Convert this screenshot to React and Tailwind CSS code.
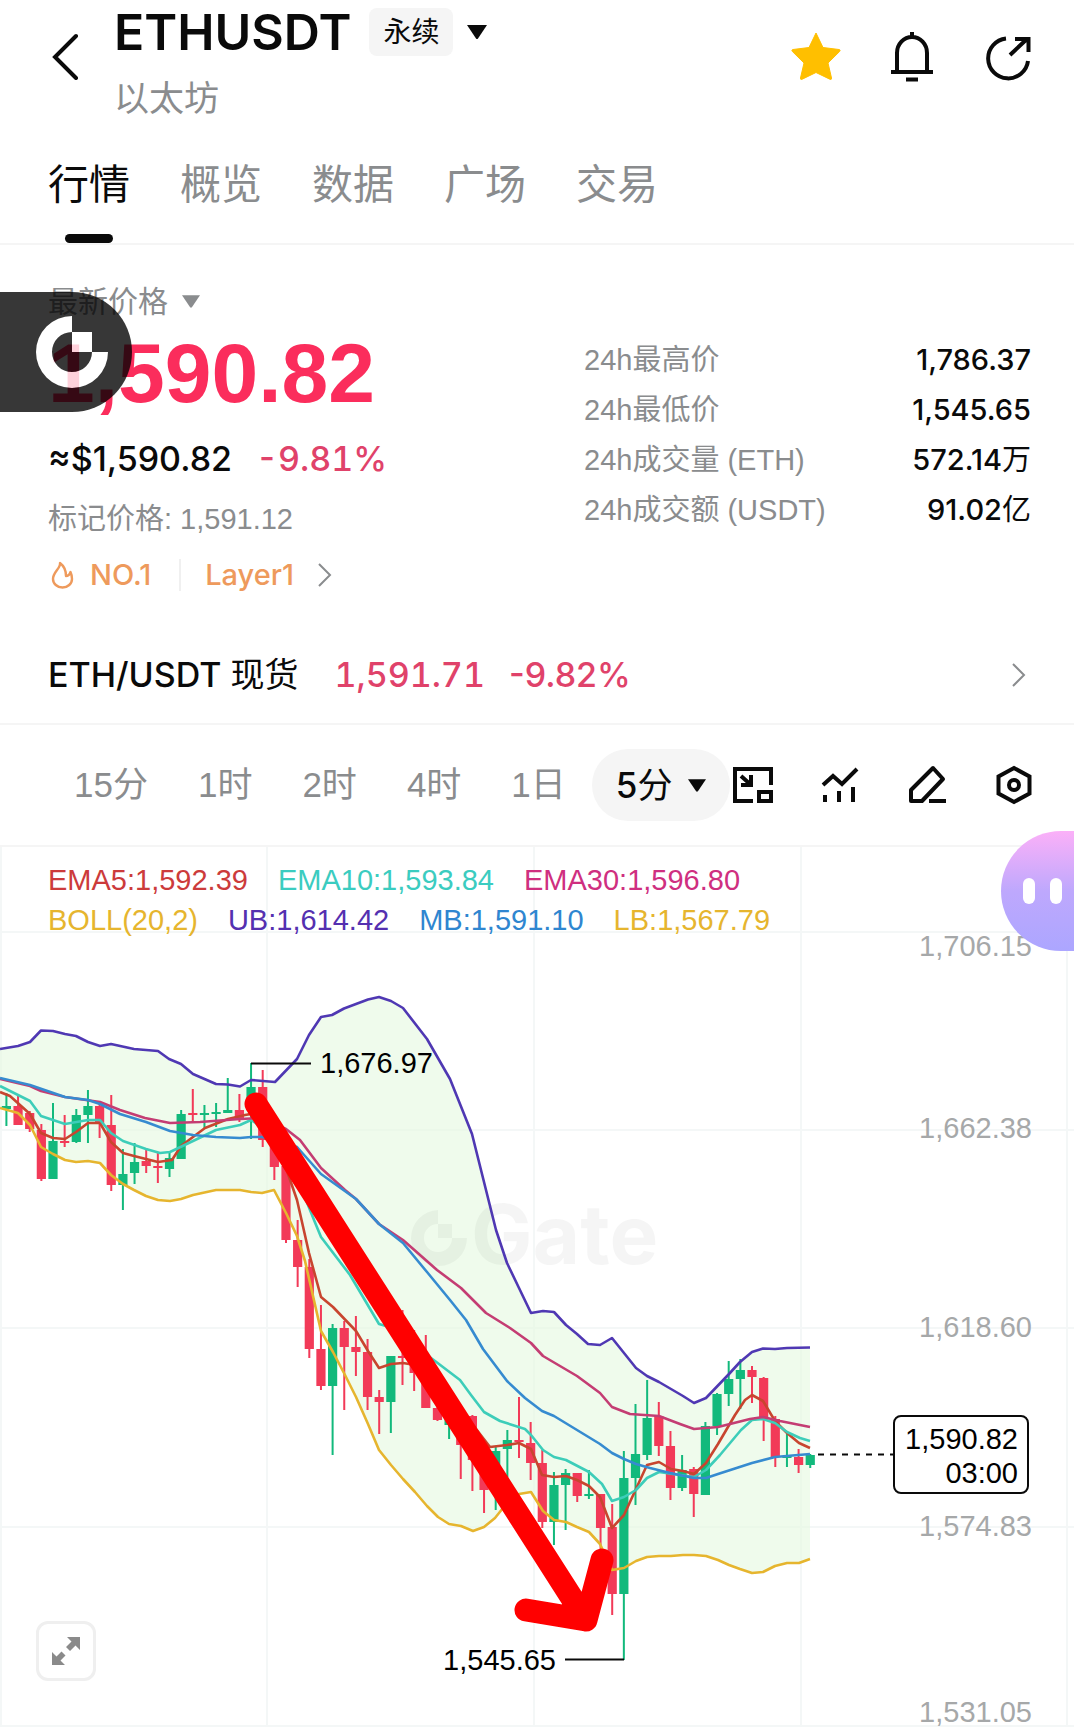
const numFont = "font-['Liberation_Sans','Noto_Sans_CJK_SC',sans-serif]"

const tabs = ['行情', '概览', '数据', '广场', '交易']

const stats = [
  { label: '24h最高价', value: '1,786.37' },
  { label: '24h最低价', value: '1,545.65' },
  { label: '24h成交量 (ETH)', value: '572.14', unit: '万' },
  { label: '24h成交额 (USDT)', value: '91.02', unit: '亿' },
]

const intervals = ['15分', '1时', '2时', '4时', '1日']

const emaLegend = [
  { text: 'EMA5:1,592.39', color: 'text-[#cc3b3b]' },
  { text: 'EMA10:1,593.84', color: 'text-[#3bccc0]' },
  { text: 'EMA30:1,596.80', color: 'text-[#cf2f80]' },
]

const bollLegend = [
  { text: 'BOLL(20,2)', color: 'text-[#e6b52e]' },
  { text: 'UB:1,614.42', color: 'text-[#5430b0]' },
  { text: 'MB:1,591.10', color: 'text-[#2f86d0]' },
  { text: 'LB:1,567.79', color: 'text-[#e6b52e]' },
]

// [up, high, body top, body bottom, low]
const candles = [
  [1, 1093, 1106, 1109, 1126], [0, 1096, 1106, 1125, 1125], [0, 1111, 1113, 1129, 1132],
  [0, 1124, 1130, 1179, 1181], [1, 1103, 1141, 1179, 1179], [0, 1115, 1141, 1143, 1147],
  [1, 1109, 1115, 1142, 1143], [1, 1090, 1106, 1115, 1143], [0, 1104, 1106, 1124, 1138],
  [0, 1095, 1125, 1185, 1191], [1, 1149, 1174, 1185, 1210], [1, 1143, 1162, 1173, 1184],
  [0, 1148, 1161, 1166, 1173], [0, 1152, 1166, 1168, 1183], [1, 1152, 1158, 1169, 1177],
  [1, 1110, 1114, 1159, 1159], [0, 1089, 1113, 1115, 1121], [1, 1105, 1113, 1115, 1128],
  [1, 1103, 1112, 1114, 1127], [1, 1078, 1110, 1113, 1113], [0, 1094, 1110, 1119, 1122],
  [1, 1063, 1087, 1110, 1139], [0, 1070, 1087, 1140, 1147], [0, 1138, 1140, 1167, 1180],
  [0, 1160, 1166, 1240, 1243], [0, 1220, 1240, 1267, 1287], [0, 1259, 1267, 1349, 1358],
  [0, 1305, 1349, 1386, 1390], [1, 1324, 1328, 1386, 1455], [0, 1321, 1328, 1347, 1410],
  [0, 1316, 1347, 1352, 1376], [0, 1339, 1352, 1397, 1410], [0, 1390, 1397, 1402, 1434],
  [1, 1356, 1356, 1402, 1433], [0, 1310, 1356, 1358, 1385], [0, 1330, 1357, 1373, 1391],
  [0, 1335, 1357, 1408, 1408], [0, 1405, 1408, 1420, 1421], [1, 1408, 1412, 1425, 1439],
  [0, 1412, 1416, 1445, 1479], [0, 1415, 1416, 1460, 1491], [0, 1446, 1450, 1490, 1513],
  [1, 1447, 1451, 1490, 1510], [1, 1430, 1440, 1449, 1477], [0, 1397, 1440, 1442, 1458],
  [0, 1422, 1443, 1463, 1480], [0, 1450, 1463, 1522, 1528], [1, 1472, 1485, 1522, 1545],
  [1, 1469, 1473, 1485, 1530], [0, 1473, 1473, 1496, 1502], [1, 1470, 1494, 1496, 1499],
  [0, 1494, 1494, 1528, 1551], [0, 1504, 1527, 1594, 1615], [1, 1451, 1478, 1594, 1660],
  [1, 1404, 1454, 1478, 1505], [1, 1380, 1418, 1455, 1460], [0, 1402, 1416, 1446, 1456],
  [0, 1431, 1446, 1488, 1500], [1, 1455, 1470, 1488, 1491], [0, 1467, 1469, 1494, 1517],
  [1, 1422, 1426, 1495, 1495], [1, 1393, 1394, 1426, 1435], [1, 1361, 1379, 1394, 1406],
  [1, 1359, 1370, 1379, 1409], [0, 1366, 1370, 1377, 1403], [0, 1377, 1378, 1419, 1441],
  [0, 1416, 1419, 1457, 1467], [1, 1434, 1456, 1458, 1467], [0, 1449, 1457, 1465, 1473],
  [1, 1454, 1455, 1465, 1468],
]

const upperBand =
  '0,1049 6,1048 18,1046 30,1042 41,1030.5 53,1031 65,1034 76,1036 88,1042 100,1046 111,1044 134,1049 158,1051 169,1059 181,1064 193,1074 216,1084 228,1084.5 240,1086.5 251,1080 275,1082 297,1059 309,1035 321,1017 332,1015 344,1008.5 356,1004 368,999.5 379,997 391,1001 403,1008 427,1039 450,1079 472,1134 484,1182 496,1230 507,1263 519,1288 531,1313 543,1311 554,1312 566,1325 577,1334 588,1344 600,1345 612,1338 636,1368 647,1376 659,1382 671,1389 683,1396 694,1403 706,1398 729,1374 740,1362 752,1352 763,1348.5 775,1349 787,1348 810,1347.5'

const lowerBand =
  '0,1108 18,1113 30,1125 41,1147 53,1154 65,1160 76,1162 88,1161 100,1163 111,1175 123,1184 134,1190 146,1196 158,1200 170,1201 181,1199 193,1195 216,1190 240,1190 251,1192 262,1193 274,1190 286,1213 297,1236 305,1261 321,1331 333,1352 345,1375 356,1397 368,1424 379,1450 391,1465 403,1479 415,1492 427,1506 438,1517 449,1524 461,1526 473,1531 484,1527 495,1518 507,1503 519,1494 531,1492 543,1511 554,1520 566,1522 577,1527 589,1532 600,1544 612,1570 624,1568 636,1561 647,1557 659,1556 671,1556 683,1555 694,1555 706,1556 718,1560 729,1565 740,1569 752,1573 763,1572 775,1566 787,1563 799,1563 810,1559'

const lines = [
  {
    color: '#c8452f',
    points:
      '0,1092 10,1096 30,1114 41,1133 53,1138 65,1139 76,1132 88,1123 100,1123 111,1142 123,1153 134,1156 158,1162 172,1160 181,1146 205,1128 228,1119 245,1115 262,1112 275,1125 286,1168 297,1200 309,1253 321,1297 333,1307 356,1331 368,1351 379,1368 391,1364 403,1363 415,1365 450,1395 473,1425 490,1447 507,1445 519,1443 531,1449 542,1475 554,1477 566,1476 577,1480 589,1486 600,1497 612,1528 624,1515 647,1465 659,1462 671,1469 683,1471 694,1474 706,1463 718,1444 735,1415 745,1400 752,1395 763,1401 775,1421 787,1433 799,1443 810,1448',
  },
  {
    color: '#3dcdb9',
    points:
      '0,1086 30,1101 41,1116 65,1124 88,1120 100,1120 111,1133 123,1141 146,1149 160,1153 170,1152 193,1141 216,1130 240,1125 251,1120 275,1135 290,1160 314,1220 321,1237 350,1275 379,1324 393,1328 427,1355 435,1361 460,1380 471,1395 484,1412 500,1421 525,1429 531,1435 543,1450 554,1457 566,1460 589,1472 602,1484 612,1501 624,1497 636,1490 647,1478 659,1472 694,1477 706,1470 720,1455 741,1430 752,1420 763,1419 775,1423 787,1432 800,1438 810,1441',
  },
  {
    color: '#c43d73',
    points:
      '0,1079 30,1086 41,1091 65,1097 100,1102 120,1110 145,1118 170,1123 200,1122 240,1119 262,1118 286,1129 300,1140 321,1168 345,1190 356,1199 379,1224 403,1240 437,1270 461,1288 486,1313 510,1328 531,1343 543,1356 577,1376 600,1393 612,1407 630,1414 659,1416 680,1424 694,1429 718,1427 750,1419 763,1417 780,1421 810,1427',
  },
  {
    color: '#368bd0',
    points:
      '0,1078 30,1085 65,1097 88,1100 100,1104 120,1114 146,1122 170,1131 193,1135 216,1137 240,1138 251,1137 262,1137 275,1140 297,1147 321,1174 356,1199 379,1224 403,1243 427,1272 450,1300 466,1320 483,1349 507,1381 525,1398 542,1411 554,1416 577,1430 600,1444 612,1453 624,1459 636,1464 650,1468 670,1473 694,1478 706,1478 718,1474 752,1463 775,1457 810,1454',
  },
  { color: '#4f38b3', points: upperBand },
  { color: '#e6b52e', points: lowerBand },
]

const axis = [
  { label: '1,706.15', y: 956 },
  { label: '1,662.38', y: 1138 },
  { label: '1,618.60', y: 1337 },
  { label: '1,574.83', y: 1536 },
  { label: '1,531.05', y: 1722 },
]

const CaretDown = ({ className }) => (
  <svg viewBox="0 0 20 14" fill="currentColor" className={className}>
    <path d="M0 0h20L11 13.500q-1 1-2 0z" />
  </svg>
)

const ChevronRight = ({ className }) => (
  <svg viewBox="0 0 14 24" fill="none" stroke="currentColor" strokeWidth="2" className={className}>
    <path d="M1 1l11 11L1 23" />
  </svg>
)

const Header = () => (
  <header className="flex items-start justify-between pr-10 pl-12">
    <div className="flex">
      <button aria-label="返回" className="mt-8 mr-[30px] h-12">
        <svg viewBox="0 0 36 48" fill="none" stroke="#0a0a0a" strokeWidth="4" strokeLinecap="round" className="h-12 w-9">
          <path d="M28 4L7 25l21 21" />
        </svg>
      </button>

      <div>
        <div className="flex items-center pt-1">
          <h1 className="text-[50px] leading-[56px] font-semibold text-[#0a0a0a]">ETHUSDT</h1>
          <span className="ml-[18px] rounded-lg bg-[#f5f5f5] px-[14px] text-[28px] leading-[48px]">永续</span>
          <button aria-label="切换交易对" className="ml-[14px]">
            <CaretDown className="h-[14px] w-5" />
          </button>
        </div>
        <p className="mt-[14px] text-[35px] leading-[48px] text-[#8a8c8e]">以太坊</p>
      </div>
    </div>

    <div className="flex gap-11 pt-[30px]">
      <button aria-label="收藏">
        <svg viewBox="0 0 52 52" className="size-[52px]">
          <path
            d="M26 3l7 14.500 16 2q2 .4.600 2L38 33l3.500 15q.3 2-1.700 1.200L26 42.500 12.200 49.200q-2 .8-1.700-1.200L14 33 2.400 21.500q-1.400-1.600.6-2l16-2z"
            fill="#ffbf00"
            stroke="#ffbf00"
            strokeLinejoin="round"
          />
        </svg>
      </button>
      <button aria-label="提醒">
        <svg viewBox="0 0 52 52" fill="none" stroke="#0a0a0a" strokeWidth="4" className="size-[52px]">
          <path d="M26 2v5M11 42V23a15 16 0 0 1 30 0v19M5 42h42M20 49.500h12" />
        </svg>
      </button>
      <button aria-label="分享">
        <svg viewBox="0 0 52 52" fill="none" stroke="#0a0a0a" strokeWidth="4" className="size-[52px]">
          <path d="M24 8.500A20 20 0 1 0 46 31M28 25L45 9M33 9h13.500v13" />
        </svg>
      </button>
    </div>
  </header>
)

const Tabs = () => (
  <nav className="flex gap-[50px] border-b-2 border-[#f5f5f5] px-12 pt-[38px]">
    {tabs.map((tab, i) => (
      <button
        key={tab}
        className={`flex flex-col items-center text-[41px] leading-[48px] ${
          i === 0 ? 'text-[#0a0a0a]' : 'text-[#8a8c8e]'
        }`}
      >
        {tab}
        {i === 0 && <span className="mt-[26px] h-[9px] w-12 rounded-full bg-[#0a0a0a]" />}
      </button>
    ))}
  </nav>
)

const FloatingLogo = () => (
  <button aria-label="Gate" className="absolute top-[47px] left-0 h-[120px] w-[132px] rounded-r-full bg-black opacity-78">
    <svg viewBox="0 0 72 74" className="ml-9 h-[74px] w-[72px]">
      <path d="M36 1A36 36 0 1 0 72 37H56A20 20 0 1 1 36 17zM36 17h20v20H36z" fill="#fff" />
    </svg>
  </button>
)

const Price = () => (
  <section className="relative flex justify-between pt-[34px] pr-[43px] pb-[54px] pl-12">
    <div>
      <button className="flex items-center gap-[14px] text-[30px] leading-[44px] text-[#8a8c8e]">
        最新价格
        <CaretDown className="h-[13px] w-[18px]" />
      </button>
      <p className={`text-[84px] leading-[100px] font-bold text-[#fb2d5c] ${numFont}`}>1,590.82</p>
      <p className="mt-3 flex gap-6 text-[34px] leading-[48px] font-medium">
        <span>≈$1,590.82</span>
        <span className="text-[#e0426a] tabular-nums">-9.81%</span>
      </p>
      <p className={`mt-[14px] text-[29px] leading-[44px] text-[#8a8c8e] ${numFont}`}>标记价格: 1,591.12</p>
      <a href="#rank" className="mt-3 flex items-center text-[29px] leading-[44px] font-medium text-[#ee9a5c]">
        <svg viewBox="0 0 24 28" fill="none" stroke="currentColor" strokeWidth="2.400" strokeLinejoin="round" className="mr-4 ml-[2px] h-7 w-6">
          <path d="M10 2c1 5-7 9-7 16a9.500 8.500 0 0 0 19 0c0-3-.5-5-1.500-7-1 3-2.500 4-4.500 4 0-5-2-10-6-13z" />
        </svg>
        NO.1
        <span className="mr-6 ml-7 h-8 w-[2px] bg-[#f0f0f0]" />
        Layer1
        <ChevronRight className="ml-6 h-6 w-[14px] text-[#8a8c8e]" />
      </a>
    </div>

    <table className="mt-14 w-[447px] self-start">
      <tbody>
        {stats.map(({ label, value, unit }) => (
          <tr key={label}>
            <th scope="row" className={`p-0 text-left text-[29px] leading-[50px] font-normal text-[#8a8c8e] ${numFont}`}>
              {label}
            </th>
            <td className="p-0 text-right text-[29px] leading-[50px] font-medium">
              {value}
              {unit && <span className="font-normal">{unit}</span>}
            </td>
          </tr>
        ))}
      </tbody>
    </table>

    <FloatingLogo />
  </section>
)

const SpotRow = () => (
  <a
    href="#spot"
    className="flex items-center border-b-2 border-[#f5f5f5] px-12 pb-6 text-[34px] leading-[48px] font-medium"
  >
    <span>
      ETH/USDT <span className="font-normal">现货</span>
    </span>
    <span className="ml-9 text-[#e0426a] tabular-nums">1,591.71</span>
    <span className="ml-6 text-[#e0426a]">-9.82%</span>
    <ChevronRight className="ml-auto h-6 w-[14px] text-[#8a8c8e]" />
  </a>
)

const Toolbar = () => (
  <div className="flex items-center justify-between border-b-2 border-[#f5f5f5] py-6 pr-10 pl-[74px]">
    <div className={`flex items-center gap-[50px] text-[35px] leading-[48px] text-[#8a8c8e] ${numFont}`}>
      {intervals.map((item) => (
        <button key={item}>{item}</button>
      ))}
      <button className="-ml-6 flex h-[72px] items-center gap-4 rounded-full bg-[#f5f5f5] px-6 font-['Inter','Noto_Sans_CJK_SC',sans-serif] text-[#0a0a0a]">
        <span>
          <span className="font-medium">5</span>分
        </span>
        <CaretDown className="h-[13px] w-[18px]" />
      </button>
    </div>

    <div className="flex gap-[47px]">
      <button aria-label="画中画">
        <svg viewBox="0 0 40 40" fill="none" stroke="#0a0a0a" strokeWidth="4" className="size-10">
          <path d="M38 20V4H2v32h18M26 27h12v9H26zM8 11l9 8M18 10v10H8" />
        </svg>
      </button>
      <button aria-label="指标">
        <svg viewBox="0 0 40 40" fill="none" stroke="#0a0a0a" strokeWidth="4" className="size-10">
          <path d="M3 20l10-9 9 8L37 4M5 30v7M19 26v11M33 22v15" />
        </svg>
      </button>
      <button aria-label="画线">
        <svg viewBox="0 0 40 40" fill="none" stroke="#0a0a0a" strokeWidth="4" strokeLinejoin="round" className="size-10">
          <path d="M4 25L26 3l10 11-21 22H4zM22 36h17" />
        </svg>
      </button>
      <button aria-label="设置">
        <svg viewBox="0 0 40 40" fill="none" stroke="#0a0a0a" strokeWidth="4" className="size-10">
          <path d="M20 3l15.500 8.500v17L20 37 4.500 28.500v-17z" />
          <circle cx="20" cy="20" r="5" />
        </svg>
      </button>
    </div>
  </div>
)

const Legend = ({ items }) => (
  <div className="flex gap-[30px]">
    {items.map(({ text, color }) => (
      <span key={text} className={color}>
        {text}
      </span>
    ))}
  </div>
)

const Chart = () => (
  <section className="relative">
    <svg viewBox="0 847 1074 880" className={`block w-full text-[29px] ${numFont}`}>
      <g stroke="#f4f7f7" strokeWidth="2">
        {[1, 267, 534, 801, 1067].map((x) => (
          <path key={x} d={`M${x} 847V1728`} />
        ))}
        {[932, 1130, 1328, 1527, 1726].map((y) => (
          <path key={y} d={`M0 ${y}H1074`} />
        ))}
      </g>

      <polygon
        points={`${upperBand} ${lowerBand.split(' ').reverse().join(' ')}`}
        fill="#e4f9df"
        fillOpacity="0.6"
      />

      <g fill="#000" fillOpacity="0.04">
        <path d="M438 1210A28 28 0 1 0 467 1238H452A14 14 0 1 1 438 1224zM438 1224h14v14h-14z" />
        <text x="471" y="1264" className="font-['Inter',sans-serif] text-[82px] font-bold">
          Gate
        </text>
      </g>

      {candles.map(([up, high, top, bottom, low], i) => {
        const x = 6.4 + i * 11.65
        return (
          <g key={i} fill={up ? '#12b97c' : '#f23a58'}>
            <rect x={x - 1} y={high} width="2" height={low - high} />
            <rect x={x - 4.6} y={top} width="9.200" height={bottom - top} />
          </g>
        )
      })}

      {lines.map(({ color, points }, i) => (
        <polyline key={i} points={points} fill="none" stroke={color} strokeWidth="2.600" strokeLinejoin="round" />
      ))}

      <path d="M251 1063.500H311M565 1659.500H624" stroke="#0a0a0a" strokeWidth="2" />
      <text x="320" y="1073">1,676.97</text>
      <text x="556" y="1670" textAnchor="end">
        1,545.65
      </text>

      <g fill="#a6a8a9" textAnchor="end">
        {axis.map(({ label, y }) => (
          <text key={label} x="1032" y={y}>
            {label}
          </text>
        ))}
      </g>

      <path d="M818 1454.500H894" stroke="#0a0a0a" strokeWidth="2" strokeDasharray="6 6" />
      <rect x="894" y="1416" width="134" height="77" rx="7" fill="#fff" stroke="#0a0a0a" strokeWidth="2" />
      <g textAnchor="end">
        <text x="1018" y="1449">1,590.82</text>
        <text x="1018" y="1483">03:00</text>
      </g>

      <path
        d="M256 1104L586 1620M526 1610L586 1620L602 1560"
        fill="none"
        stroke="#f00"
        strokeWidth="23"
        strokeLinecap="round"
        strokeLinejoin="round"
      />
    </svg>

    <div className={`absolute top-[13px] left-12 text-[29px] leading-[40px] ${numFont}`}>
      <Legend items={emaLegend} />
      <Legend items={bollLegend} />
    </div>

    <button
      aria-label="全屏"
      className="absolute bottom-[46px] left-9 flex size-[60px] items-center justify-center rounded-xl border-3 border-[#efefef] bg-white"
    >
      <svg viewBox="0 0 28 28" fill="#8a8a8a" className="size-7">
        <path d="M15 0h13v13l-4.500-4.500-5.500 5.500-4-4 5.500-5.500zM13 28H0V15l4.500 4.500 5-5 4 4-5 5z" />
      </svg>
    </button>

    <button
      aria-label="智能助手"
      className="absolute -top-4 right-0 flex h-[120px] w-[73px] items-center gap-[15px] rounded-l-full bg-linear-to-b from-[#fbb0f8] via-[#bea8fd] to-[#aca6ff] pl-[22px]"
    >
      <span className="h-[26px] w-3 rounded-full bg-white" />
      <span className="h-[26px] w-3 rounded-full bg-white" />
    </button>
  </section>
)

export default function App() {
  return (
    <main className="min-h-screen overflow-x-hidden bg-white font-['Inter','Noto_Sans_CJK_SC',sans-serif] text-[#0a0a0a]">
      <Header />
      <Tabs />
      <Price />
      <SpotRow />
      <Toolbar />
      <Chart />
    </main>
  )
}
